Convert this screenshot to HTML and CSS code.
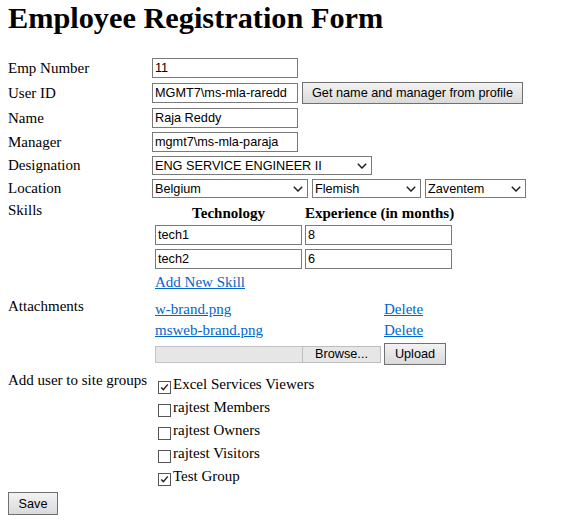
FILE: index.html
```html
<!DOCTYPE html>
<html lang="en">
<head>
<meta charset="utf-8">
<title>Employee Registration Form</title>
<link rel="stylesheet" href="styles.css">
</head>
<body>
<h1 class="title">Employee Registration Form</h1>
<form class="form">
  <div class="row row-first">
    <span class="lbl">Emp Number</span>
    <input class="txt" type="text" value="11">
  </div>
  <div class="row row-btn">
    <span class="lbl">User ID</span>
    <input class="txt" type="text" value="MGMT7\ms-mla-raredd">
    <button type="button" class="btn btn-profile">Get name and manager from profile</button>
  </div>
  <div class="row">
    <span class="lbl">Name</span>
    <input class="txt" type="text" value="Raja Reddy">
  </div>
  <div class="row">
    <span class="lbl">Manager</span>
    <input class="txt" type="text" value="mgmt7\ms-mla-paraja">
  </div>
  <div class="row row-sel">
    <span class="lbl">Designation</span>
    <select class="sel sel-desig"><option>ENG SERVICE ENGINEER II</option></select>
  </div>
  <div class="row row-sel">
    <span class="lbl">Location</span>
    <div class="sel-group">
      <select class="sel sel-country"><option>Belgium</option></select>
      <select class="sel sel-lang"><option>Flemish</option></select>
      <select class="sel sel-city"><option>Zaventem</option></select>
    </div>
  </div>

  <div class="section section-skills">
    <span class="lbl">Skills</span>
    <div class="sec-body">
      <div class="skill-grid">
        <span class="th">Technology</span>
        <span class="th">Experience (in months)</span>
        <input class="txt skill-in" type="text" value="tech1">
        <input class="txt skill-in" type="text" value="8">
        <input class="txt skill-in" type="text" value="tech2">
        <input class="txt skill-in" type="text" value="6">
      </div>
      <div class="add-skill"><a class="link" href="#">Add New Skill</a></div>
    </div>
  </div>

  <div class="section section-attach">
    <span class="lbl">Attachments</span>
    <div class="sec-body">
      <div class="attach-grid">
        <a class="link" href="#">w-brand.png</a>
        <a class="link" href="#">Delete</a>
        <a class="link" href="#">msweb-brand.png</a>
        <a class="link" href="#">Delete</a>
        <div class="file-pick">
          <span class="file-field"></span>
          <button type="button" class="btn-browse">Browse...</button>
        </div>
        <button type="button" class="btn btn-upload">Upload</button>
      </div>
    </div>
  </div>

  <div class="section section-groups">
    <span class="lbl lbl-nowrap">Add user to site groups</span>
    <div class="sec-body group-list">
      <label class="opt"><input type="checkbox" class="chk" checked><span class="opt-text">Excel Services Viewers</span></label>
      <label class="opt"><input type="checkbox" class="chk"><span class="opt-text">rajtest Members</span></label>
      <label class="opt"><input type="checkbox" class="chk"><span class="opt-text">rajtest Owners</span></label>
      <label class="opt"><input type="checkbox" class="chk"><span class="opt-text">rajtest Visitors</span></label>
      <label class="opt"><input type="checkbox" class="chk" checked><span class="opt-text">Test Group</span></label>
    </div>
  </div>

  <button type="button" class="btn btn-save">Save</button>
</form>
</body>
</html>
```

FILE: styles.css
```css
html, body {
  background: #fff;
}

body {
  margin: 0 8px;
  font-family: "Liberation Serif", "Times New Roman", serif;
  font-size: 15px;
  color: #000;
}

.title {
  margin: 1px 0 0;
  font-size: 30.3px;
  line-height: 34px;
  font-weight: bold;
}

.form {
  margin-top: 23px;
}

.row {
  display: flex;
  align-items: center;
  height: 20px;
  margin-top: 4px;
}

.row-first {
  margin-top: 0;
}

.row-btn {
  height: 22px;
}

.row-sel {
  height: 19px;
}

.lbl {
  flex: none;
  width: 144px;
  line-height: 17px;
}

.lbl-nowrap {
  white-space: nowrap;
}

.txt {
  flex: none;
  box-sizing: border-box;
  width: 146px;
  height: 20px;
  margin: 0;
  padding: 0 2px;
  border: 1px solid #7a7a7a;
  border-radius: 0;
  background: #fff;
  font-family: "Liberation Sans", Arial, sans-serif;
  font-size: 12.7px;
  color: #000;
  outline: none;
}

.btn {
  box-sizing: border-box;
  margin: 0;
  padding: 0;
  border: 1px solid #707070;
  border-radius: 0;
  background: linear-gradient(#f3f3f3, #e6e6e6 50%, #dadada);
  font-family: "Liberation Sans", Arial, sans-serif;
  font-size: 12.7px;
  color: #000;
  text-align: center;
}

.btn-profile {
  margin-left: 4px;
  width: 221px;
  height: 22px;
}

.sel {
  flex: none;
  box-sizing: border-box;
  height: 19px;
  margin: 0;
  padding: 0 14px 0 2px;
  border: 1px solid #7a7a7a;
  border-radius: 0;
  -webkit-appearance: none;
  appearance: none;
  background: #fff url("data:image/svg+xml,%3Csvg xmlns='http://www.w3.org/2000/svg' width='10' height='6' viewBox='0 0 10 6'%3E%3Cpath d='M0.8 0.8L5 5L9.2 0.8' fill='none' stroke='%23222' stroke-width='1.5'/%3E%3C/svg%3E") no-repeat right 4px center / 10px 6px;
  font-family: "Liberation Sans", Arial, sans-serif;
  font-size: 12.7px;
  color: #000;
  outline: none;
}

.sel-desig {
  width: 220px;
}

.sel-group {
  display: flex;
  gap: 4px;
}

.sel-country {
  width: 156px;
}

.sel-lang {
  width: 109px;
}

.sel-city {
  width: 101px;
}

.section {
  display: flex;
  align-items: flex-start;
  margin-top: 7px;
}

.section-skills {
  margin-top: 4px;
}

.sec-body {
  padding: 3px 0 0 3px;
}

.skill-grid {
  display: grid;
  grid-template-columns: 147px auto;
  column-gap: 3px;
  row-gap: 4px;
  align-items: start;
}

.th {
  font-weight: bold;
  text-align: center;
  line-height: 16px;
  white-space: nowrap;
}

.skill-in {
  width: 147px;
}

.add-skill {
  margin-top: 5px;
  line-height: 17px;
}

.link {
  color: #0066cc;
  text-decoration: underline;
  line-height: 17px;
}

.attach-grid {
  display: grid;
  grid-template-columns: 226px auto;
  column-gap: 3px;
  row-gap: 4px;
  align-items: center;
  justify-items: start;
}

.file-pick {
  display: flex;
  align-items: center;
}

.file-field {
  box-sizing: border-box;
  width: 147px;
  height: 17px;
  border: 1px solid #c4c4c4;
  border-right: none;
  background: #e6e6e6;
}

.btn-browse {
  box-sizing: border-box;
  width: 79px;
  height: 17px;
  margin: 0;
  padding: 0;
  border: 1px solid #bdbdbd;
  border-radius: 0;
  background: #e6e6e6;
  font-family: "Liberation Sans", Arial, sans-serif;
  font-size: 12.7px;
  color: #000;
  text-align: center;
}

.btn-upload {
  width: 62px;
  height: 22px;
}

.group-list {
  padding: 3px 0 0 0;
}

.opt {
  display: flex;
  align-items: flex-start;
  height: 23px;
}

.chk {
  flex: none;
  -webkit-appearance: none;
  appearance: none;
  box-sizing: border-box;
  width: 13px;
  height: 13px;
  margin: 6px 2px 0 6px;
  border: 1px solid #555;
  border-radius: 0;
  background: #fff;
  outline: none;
}

.chk:checked {
  background: #fff url("data:image/svg+xml,%3Csvg xmlns='http://www.w3.org/2000/svg' width='11' height='11' viewBox='0 0 11 11'%3E%3Cpath d='M2.2 5.4L4.4 7.6L8.8 2.4' fill='none' stroke='%23222' stroke-width='1.4'/%3E%3C/svg%3E") no-repeat center / 11px 11px;
}

.opt-text {
  margin-top: 1px;
  line-height: 17px;
}

.btn-save {
  display: block;
  margin-top: 2px;
  width: 50px;
  height: 23px;
}
```
